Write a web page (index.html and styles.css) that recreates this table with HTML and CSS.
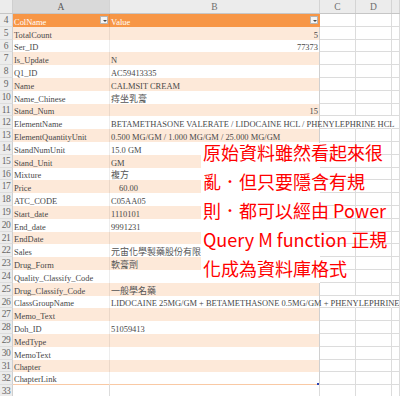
FILE: index.html
```html
<!DOCTYPE html>
<html lang="zh-Hant">
<head>
<meta charset="utf-8">
<link rel="stylesheet" href="styles.css">
</head>
<body>
<div class="sheet">
  <div class="colhead">
    <div class="corner"></div>
    <div class="ch a sel">A</div>
    <div class="ch b">B</div>
    <div class="ch c">C</div>
    <div class="ch d">D</div>
    <div class="ch e"></div>
  </div>

  <div class="row head"><div class="rn">4</div><div class="cell a"><span>ColName</span><i class="flt"></i></div><div class="cell b"><span>Value</span><i class="flt"></i></div><div class="cell c"></div><div class="cell d"></div><div class="cell e"></div></div>
  <div class="row band"><div class="rn">5</div><div class="cell a">TotalCount</div><div class="cell b num">5</div><div class="cell c"></div><div class="cell d"></div><div class="cell e"></div></div>
  <div class="row"><div class="rn">6</div><div class="cell a">Ser_ID</div><div class="cell b num">77373</div><div class="cell c"></div><div class="cell d"></div><div class="cell e"></div></div>
  <div class="row band"><div class="rn">7</div><div class="cell a">Is_Update</div><div class="cell b">N</div><div class="cell c"></div><div class="cell d"></div><div class="cell e"></div></div>
  <div class="row"><div class="rn">8</div><div class="cell a">Q1_ID</div><div class="cell b">AC59413335</div><div class="cell c"></div><div class="cell d"></div><div class="cell e"></div></div>
  <div class="row band"><div class="rn">9</div><div class="cell a">Name</div><div class="cell b">CALMSIT CREAM</div><div class="cell c"></div><div class="cell d"></div><div class="cell e"></div></div>
  <div class="row"><div class="rn">10</div><div class="cell a">Name_Chinese</div><div class="cell b cjk">痔坐乳膏</div><div class="cell c"></div><div class="cell d"></div><div class="cell e"></div></div>
  <div class="row band"><div class="rn">11</div><div class="cell a">Stand_Num</div><div class="cell b num">15</div><div class="cell c"></div><div class="cell d"></div><div class="cell e"></div></div>
  <div class="row spill"><div class="rn">12</div><div class="cell a">ElementName</div><div class="cell b">BETAMETHASONE VALERATE / LIDOCAINE HCL / PHENYLEPHRINE HCL</div><div class="cell c"></div><div class="cell d"></div><div class="cell e"></div></div>
  <div class="row band"><div class="rn">13</div><div class="cell a">ElementQuantityUnit</div><div class="cell b">0.500 MG/GM / 1.000 MG/GM / 25.000 MG/GM</div><div class="cell c"></div><div class="cell d"></div><div class="cell e"></div></div>
  <div class="row"><div class="rn">14</div><div class="cell a">StandNumUnit</div><div class="cell b">15.0 GM</div><div class="cell c"></div><div class="cell d"></div><div class="cell e"></div></div>
  <div class="row band"><div class="rn">15</div><div class="cell a">Stand_Unit</div><div class="cell b">GM</div><div class="cell c"></div><div class="cell d"></div><div class="cell e"></div></div>
  <div class="row"><div class="rn">16</div><div class="cell a">Mixture</div><div class="cell b cjk">複方</div><div class="cell c"></div><div class="cell d"></div><div class="cell e"></div></div>
  <div class="row band"><div class="rn">17</div><div class="cell a">Price</div><div class="cell b indent">60.00</div><div class="cell c"></div><div class="cell d"></div><div class="cell e"></div></div>
  <div class="row"><div class="rn">18</div><div class="cell a">ATC_CODE</div><div class="cell b">C05AA05</div><div class="cell c"></div><div class="cell d"></div><div class="cell e"></div></div>
  <div class="row band"><div class="rn">19</div><div class="cell a">Start_date</div><div class="cell b">1110101</div><div class="cell c"></div><div class="cell d"></div><div class="cell e"></div></div>
  <div class="row"><div class="rn">20</div><div class="cell a">End_date</div><div class="cell b">9991231</div><div class="cell c"></div><div class="cell d"></div><div class="cell e"></div></div>
  <div class="row band"><div class="rn">21</div><div class="cell a">EndDate</div><div class="cell b"></div><div class="cell c"></div><div class="cell d"></div><div class="cell e"></div></div>
  <div class="row"><div class="rn">22</div><div class="cell a">Sales</div><div class="cell b cjk clip">元宙化學製藥股份有限</div><div class="cell c"></div><div class="cell d"></div><div class="cell e"></div></div>
  <div class="row band"><div class="rn">23</div><div class="cell a">Drug_Form</div><div class="cell b cjk">軟膏劑</div><div class="cell c"></div><div class="cell d"></div><div class="cell e"></div></div>
  <div class="row"><div class="rn">24</div><div class="cell a">Quality_Classify_Code</div><div class="cell b"></div><div class="cell c"></div><div class="cell d"></div><div class="cell e"></div></div>
  <div class="row band"><div class="rn">25</div><div class="cell a">Drug_Classify_Code</div><div class="cell b cjk">一般學名藥</div><div class="cell c"></div><div class="cell d"></div><div class="cell e"></div></div>
  <div class="row spill"><div class="rn">26</div><div class="cell a">ClassGroupName</div><div class="cell b">LIDOCAINE 25MG/GM + BETAMETHASONE 0.5MG/GM + PHENYLEPHRINE</div><div class="cell c"></div><div class="cell d"></div><div class="cell e"></div></div>
  <div class="row band"><div class="rn">27</div><div class="cell a">Memo_Text</div><div class="cell b"></div><div class="cell c"></div><div class="cell d"></div><div class="cell e"></div></div>
  <div class="row"><div class="rn">28</div><div class="cell a">Doh_ID</div><div class="cell b">51059413</div><div class="cell c"></div><div class="cell d"></div><div class="cell e"></div></div>
  <div class="row band"><div class="rn">29</div><div class="cell a">MedType</div><div class="cell b"></div><div class="cell c"></div><div class="cell d"></div><div class="cell e"></div></div>
  <div class="row"><div class="rn">30</div><div class="cell a">MemoText</div><div class="cell b"></div><div class="cell c"></div><div class="cell d"></div><div class="cell e"></div></div>
  <div class="row band"><div class="rn">31</div><div class="cell a">Chapter</div><div class="cell b"></div><div class="cell c"></div><div class="cell d"></div><div class="cell e"></div></div>
  <div class="row last"><div class="rn">32</div><div class="cell a">ChapterLink</div><div class="cell b"></div><div class="cell c"></div><div class="cell d"></div><div class="cell e"></div></div>
  <div class="row plain"><div class="rn">33</div><div class="cell a"></div><div class="cell b"></div><div class="cell c"></div><div class="cell d"></div><div class="cell e"></div></div>

  <div class="handle"></div>
  <div class="note">
    <p>原始資料雖然看起來很</p>
    <p>亂．但只要隱含有規</p>
    <p>則．都可以經由 Power</p>
    <p>Query M function 正規</p>
    <p>化成為資料庫格式</p>
  </div>
</div>
</body>
</html>
```

FILE: styles.css
```css
* { box-sizing: border-box; }

html, body {
  margin: 0;
  padding: 0;
  background: #ffffff;
}

body {
  width: 400px;
  height: 396px;
  overflow: hidden;
  font-family: "Liberation Serif", "Noto Sans CJK TC", serif;
  color: #474747;
}

.sheet {
  position: relative;
  width: 400px;
  height: 396px;
  overflow: hidden;
}

.colhead {
  display: flex;
  height: 14px;
  background: #ececec;
  border-bottom: 1px solid #c6c6c6;
}

.corner {
  width: 13px;
  flex: none;
  background: #ececec;
  border-right: 1px solid #cfcfcf;
}

.ch {
  flex: none;
  display: flex;
  align-items: center;
  justify-content: center;
  font-size: 9.5px;
  color: #6f6f6f;
  border-right: 1px solid #d4d4d4;
}

.ch.sel {
  background: #d9d9d9;
  color: #5a5a5a;
}

.a { width: 97px; flex: none; }
.b { width: 210px; flex: none; }
.c { width: 36px; flex: none; }
.d { width: 36px; flex: none; }
.e { flex: 1; }

.row {
  display: flex;
  height: 12.8px;
}

.rn {
  width: 13px;
  flex: none;
  background: #ececec;
  border-right: 1px solid #cfcfcf;
  border-bottom: 1px solid #dddddd;
  font-size: 9.5px;
  color: #666666;
  text-align: center;
  line-height: 12px;
  letter-spacing: -0.4px;
}

.cell {
  display: flex;
  align-items: flex-end;
  font-size: 8.45px;
  line-height: 10px;
  white-space: nowrap;
  padding-left: 1px;
}

.cell.a {
  border-right: 1px solid rgba(0, 0, 0, 0.07);
  overflow: hidden;
}

.cell.b {
  border-right: 1px solid #d0d0d0;
}

.cell.c, .cell.d, .cell.e {
  border-right: 1px solid #dcdcdc;
  border-bottom: 1px solid #dcdcdc;
}

.row.spill .cell.b { overflow: visible; }
.row.spill .cell.c,
.row.spill .cell.d {
  border-right-color: transparent;
}

.cjk {
  font-family: "Noto Sans CJK TC", sans-serif;
  font-size: 9px;
  color: #555555;
}

.num {
  justify-content: flex-end;
  padding-right: 1px;
}

.indent { padding-left: 9px; }

.band .cell.a,
.band .cell.b {
  background: #fde9d9;
}

.row.head .cell.a,
.row.head .cell.b {
  background: #f79646;
  color: #ffffff;
  justify-content: space-between;
  align-items: center;
  padding-right: 1px;
}

.row.head .cell.a span,
.row.head .cell.b span {
  align-self: flex-end;
}

.row.head .cell.b { border-right-color: #f79646; }

.flt {
  position: relative;
  width: 8px;
  height: 8px;
  background: #f4f4f4;
  border: 1px solid #b5b5b5;
  flex: none;
}

.flt::after {
  content: "";
  position: absolute;
  left: 1.5px;
  top: 2.5px;
  border-left: 2px solid transparent;
  border-right: 2px solid transparent;
  border-top: 2px solid #444444;
}

.row.last .cell.a,
.row.last .cell.b {
  border-bottom: 1px solid #f9c9a4;
}

.row.plain .cell.a,
.row.plain .cell.b {
  border-right: 1px solid #dcdcdc;
  border-bottom: 1px solid #dcdcdc;
}

.handle {
  position: absolute;
  left: 317px;
  top: 383px;
  width: 2px;
  height: 2px;
  background: #2a3fb0;
}

.note {
  position: absolute;
  left: 201px;
  top: 142.5px;
  width: 199px;
  padding-left: 2px;
  font-family: "Noto Sans CJK TC", sans-serif;
  font-size: 18px;
  color: #ff0000;
  background: linear-gradient(#ffffff, #ffffff) 0 0 / 119px 140px no-repeat;
}

.note p {
  margin: 0 0 11.2px;
  height: 18px;
  line-height: 18px;
  white-space: nowrap;
}
```
